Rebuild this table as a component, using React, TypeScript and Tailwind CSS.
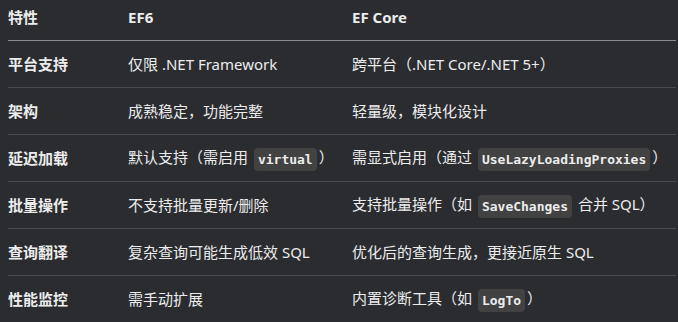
import React from "react";

const Code = ({ children }: { children: React.ReactNode }) => (
  <code
    className="mx-[2px] inline-block rounded-[4px] bg-[#424242] px-[4px] py-[2px] align-middle text-[13px] font-bold leading-[19px] text-[#ececec]"
    style={{ fontFamily: '"DejaVu Sans Mono", "Liberation Mono", monospace' }}
  >
    {children}
  </code>
);

const rows: [string, React.ReactNode, React.ReactNode][] = [
  ["平台支持", <>仅限 .NET Framework</>, <>跨平台（.NET Core/.NET 5+）</>],
  ["架构", <>成熟稳定，功能完整</>, <>轻量级，模块化设计</>],
  [
    "延迟加载",
    <>
      默认支持（需启用 <Code>virtual</Code>）
    </>,
    <>
      需显式启用（通过 <Code>UseLazyLoadingProxies</Code>）
    </>,
  ],
  [
    "批量操作",
    <>不支持批量更新/删除</>,
    <>
      支持批量操作（如 <Code>SaveChanges</Code> 合并 SQL）
    </>,
  ],
  ["查询翻译", <>复杂查询可能生成低效 SQL</>, <>优化后的查询生成，更接近原生 SQL</>],
  [
    "性能监控",
    <>需手动扩展</>,
    <>
      内置诊断工具（如 <Code>LogTo</Code>）
    </>,
  ],
];

export default function App() {
  return (
    <div
      className="h-[322px] w-[678px] overflow-hidden bg-[#2b2c30] pl-[8px] pr-[2px] text-[15px] text-[#ececec]"
      style={{ fontFamily: '"Noto Sans", "Noto Sans CJK SC", sans-serif' }}
    >
      <div className="flex h-[41px] items-start border-b border-[#8a8a8a] pt-[5px] font-bold leading-[24px]">
        <div className="w-[120px]">特性</div>
        <div className="w-[224px]">EF6</div>
        <div className="flex-1">EF Core</div>
      </div>
      {rows.map(([a, b, c], i) => (
        <div
          key={i}
          className="flex h-[47px] items-center border-b border-[#4a4a4c] leading-[24px]"
        >
          <div className="w-[120px] font-bold">{a}</div>
          <div className="w-[224px]">{b}</div>
          <div className="flex-1">{c}</div>
        </div>
      ))}
    </div>
  );
}
